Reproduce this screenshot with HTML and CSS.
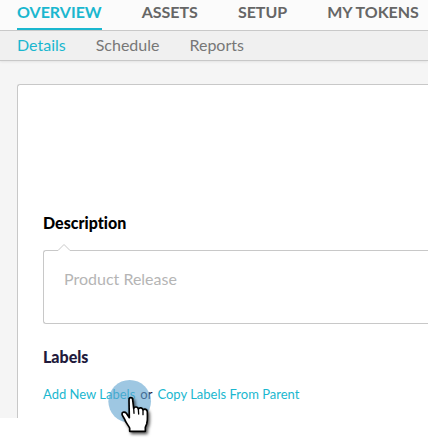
FILE: index.html
```
<!DOCTYPE html>
<html lang="en">
<head>
<meta charset="utf-8">
<title>Overview</title>
<link rel="stylesheet" href="styles.css">
</head>
<body>
<div class="workspace">
  <nav class="tabs" aria-label="Main">
    <a class="tab active" href="#overview">OVERVIEW</a>
    <a class="tab" href="#assets">ASSETS</a>
    <a class="tab" href="#setup">SETUP</a>
    <a class="tab" href="#tokens">MY TOKENS</a>
  </nav>
  <nav class="subtabs" aria-label="Overview">
    <a class="subtab active" href="#details">Details</a>
    <a class="subtab" href="#schedule">Schedule</a>
    <a class="subtab" href="#reports">Reports</a>
  </nav>
  <main class="card">
    <label class="heading" for="description">Description</label>
    <div class="field">
      <svg class="notch" viewBox="0 0 14 8" aria-hidden="true"><path d="M1 7.5 7 1l6 6.5V8H1z" fill="#fff"/><path d="M1 7.5 7 1.5l6 6" fill="none" stroke="#c8c8c8"/></svg>
      <textarea class="description" id="description">Product Release</textarea>
    </div>
    <h2 class="heading labels-heading">Labels</h2>
    <p class="label-actions">
      <a href="#add">Add New Labels</a>
      <span class="or">or</span>
      <a href="#copy">Copy Labels From Parent</a>
      <svg class="pointer" viewBox="0 0 210 237" aria-hidden="true">
        <defs><filter id="shadow" x="-30%" y="-30%" width="170%" height="170%"><feDropShadow dx="5" dy="6" stdDeviation="5" flood-color="#000" flood-opacity=".65"/></filter></defs>
        <circle cx="104" cy="109" r="64" fill="#5da2cf" fill-opacity=".6"/>
        <path filter="url(#shadow)" d="M102 104c0-8 11-8 11 0l3 26c3-6 13-5 14 2 4-6 13-4 14 3 5-5 13-2 13 6 0 14 2 24-2 36l-4 10v12h-47v-10c-5-10-12-16-15-26-2-6-8-10-8-16 0-7 9-7 13-2l9 13z" fill="#fff" stroke="#000" stroke-width="5" stroke-linejoin="round"/>
        <path d="m116 128 1 17m13-13 1 15m13-11v13" fill="none" stroke="#000" stroke-width="4" stroke-linecap="round"/>
      </svg>
    </p>
  </main>
</div>
</body>
</html>
```
FILE: styles.css
```
* {
  box-sizing: border-box;
}

body {
  margin: 0;
  min-height: 100vh;
  background: #fff;
  font-family: Lato, "Open Sans", sans-serif;
  font-variant-ligatures: none;
}

a {
  text-decoration: none;
  color: #1ab7cf;
}

.workspace {
  background: #f5f5f5;
}

.tabs,
.subtabs {
  display: flex;
  padding-left: 17px;
  border-bottom: 1px solid #c8c8c8;
  white-space: nowrap;
  font-size: 16px;
}

.tabs {
  gap: 40px;
  background: #fbfbfb;
}

.tab {
  height: 30px;
  line-height: 24px;
  font-weight: 700;
  color: #666;
}

.tab.active {
  color: #1ab7cf;
  border-bottom: 2px solid #1ab7cf;
}

.subtabs {
  gap: 30px;
  background: #f0f0f0;
  box-shadow: 0 1px 2px #e4e4e4;
}

.subtab {
  height: 29px;
  line-height: 27px;
  color: #777;
}

.subtab.active {
  color: #1ab7cf;
}

.card {
  margin: 23px 0 0 17px;
  padding: 128px 0 15px 25px;
  background: #fff;
  border: 1px solid #c8c8c8;
  border-width: 1px 0 0 1px;
  border-top-left-radius: 3px;
}

.heading {
  display: block;
  margin: 0;
  font-size: 16px;
  line-height: 20px;
  font-weight: 900;
  color: #000;
}

.field {
  position: relative;
  margin-top: 17px;
}

.notch {
  position: absolute;
  left: 14px;
  top: -7px;
  width: 14px;
  height: 8px;
}

.description {
  display: block;
  width: 100%;
  height: 74px;
  padding: 18px 20px;
  border: 1px solid #c8c8c8;
  border-right: 0;
  border-radius: 3px 0 0 3px;
  background: #fff;
  color: #b5b5b5;
  font: 16px/20px Lato, "Open Sans", sans-serif;
  resize: none;
  outline: none;
}

.labels-heading {
  margin-top: 23px;
  color: #211a3c;
}

.label-actions {
  position: relative;
  display: flex;
  gap: 5px;
  margin: 18px 0 0;
  font-size: 13px;
  line-height: 18px;
  white-space: nowrap;
}

.or {
  color: #211a3c;
}

.pointer {
  position: absolute;
  left: 52px;
  top: -20px;
  width: 70px;
  height: 79px;
  pointer-events: none;
}
```
